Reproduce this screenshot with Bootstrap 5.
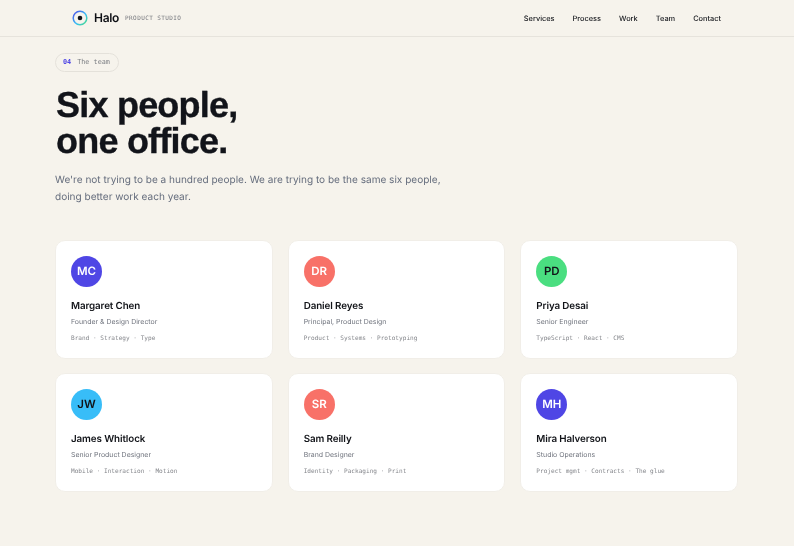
<!doctype html>
<html lang="en"><head><meta charset="utf-8"><title>Halo</title>
<link href="https://cdn.jsdelivr.net/npm/bootstrap@5.3.0/dist/css/bootstrap.min.css" rel="stylesheet">
<style>
body{background:#f6f3ec;font-family:Inter,"Liberation Sans",sans-serif;color:#111318;height:546px;overflow:hidden;text-rendering:geometricPrecision}
.topbar,.page{will-change:opacity}
.topbar{height:37px;padding:0 73px 0 72px;border-bottom:1px solid #e6e3dc}
.brandname{font-size:12px;font-weight:600;letter-spacing:-.3px;color:#0d0f14;margin-left:6px}
.brandtag{font-family:"DejaVu Sans Mono",monospace;font-size:6px;letter-spacing:.4px;color:#75777d;margin-left:6px}
.toplink{font-size:7.4px;font-weight:500;color:#16181d;text-decoration:none;padding-top:1px}
.navlinks{gap:18px}
.page{padding:16px 56px 0 55px}
.chip{width:64px;height:19px;padding:0 0 0 7px;border:1px solid #e4e1da;border-radius:10px;font-family:"DejaVu Sans Mono",monospace;font-size:6.8px;color:#7f8186;gap:6px}
.chip b{color:#4f46e5}
.headline{font-family:"Liberation Sans",sans-serif;font-size:36px;line-height:36px;font-weight:700;letter-spacing:-.78px;margin:15px 0 0 1px;color:#12141a;-webkit-text-stroke:.35px #12141a}
.intro{font-size:10.05px;line-height:17px;color:#646c7c;margin:13px 0 0}
.people{display:grid;grid-template-columns:repeat(3,1fr);grid-auto-rows:119.4px;gap:13.6px 15px;margin-top:34px}
.person{background:#fff;border:1px solid #f1eee8;border-radius:10px;padding:15px}
.avatar{width:31px;height:31px;font-size:11.5px;font-weight:600}
.pname{font-size:9.8px;font-weight:600;letter-spacing:-.1px;color:#111318;margin-top:13px;line-height:14px}
.prole{font-size:6.95px;color:#70747e;margin-top:2px;line-height:11px}
.ptags{font-family:"DejaVu Sans Mono",monospace;font-size:6.1px;color:#84868b;margin-top:6px;line-height:11px;white-space:nowrap}
.a1{background:#4f46e5;color:#fff}.a2{background:#f87168;color:#fff}.a3{background:#4ade80;color:#111318}.a4{background:#38bdf8;color:#111318}
</style></head><body>
<nav class="topbar d-flex align-items-center justify-content-between">
<div class="d-flex align-items-center">
<svg width="16" height="16" viewBox="0 0 16 16"><defs><linearGradient id="g" x1="0" y1="0" x2="1" y2="1"><stop offset="0" stop-color="#4f46e5"/><stop offset=".55" stop-color="#38bdf8"/><stop offset="1" stop-color="#4ade80"/></linearGradient></defs><circle cx="8" cy="8" r="6.8" fill="none" stroke="url(#g)" stroke-width="1.5"/><circle cx="8" cy="8" r="2.3" fill="#111318"/></svg>
<span class="brandname">Halo</span><span class="brandtag">PRODUCT STUDIO</span></div>
<div class="d-flex navlinks"><a class="toplink" href="#">Services</a><a class="toplink" href="#">Process</a><a class="toplink" href="#">Work</a><a class="toplink" href="#">Team</a><a class="toplink" href="#">Contact</a></div>
</nav>
<main class="page">
<div class="chip d-flex align-items-center"><b>04</b><span>The team</span></div>
<h1 class="headline">Six people,<br>one office.</h1>
<p class="intro">We're not trying to be a hundred people. We are trying to be the same six people,<br>doing better work each year.</p>
<div class="people">
<div class="person"><div class="avatar a1 rounded-circle d-flex align-items-center justify-content-center">MC</div><div class="pname">Margaret Chen</div><div class="prole">Founder &amp; Design Director</div><div class="ptags">Brand · Strategy · Type</div></div>
<div class="person"><div class="avatar a2 rounded-circle d-flex align-items-center justify-content-center">DR</div><div class="pname">Daniel Reyes</div><div class="prole">Principal, Product Design</div><div class="ptags">Product · Systems · Prototyping</div></div>
<div class="person"><div class="avatar a3 rounded-circle d-flex align-items-center justify-content-center">PD</div><div class="pname">Priya Desai</div><div class="prole">Senior Engineer</div><div class="ptags">TypeScript · React · CMS</div></div>
<div class="person"><div class="avatar a4 rounded-circle d-flex align-items-center justify-content-center">JW</div><div class="pname">James Whitlock</div><div class="prole">Senior Product Designer</div><div class="ptags">Mobile · Interaction · Motion</div></div>
<div class="person"><div class="avatar a2 rounded-circle d-flex align-items-center justify-content-center">SR</div><div class="pname">Sam Reilly</div><div class="prole">Brand Designer</div><div class="ptags">Identity · Packaging · Print</div></div>
<div class="person"><div class="avatar a1 rounded-circle d-flex align-items-center justify-content-center">MH</div><div class="pname">Mira Halverson</div><div class="prole">Studio Operations</div><div class="ptags">Project mgmt · Contracts · The glue</div></div>
</div>
</main>
<script src="https://cdn.jsdelivr.net/npm/bootstrap@5.3.0/dist/js/bootstrap.bundle.min.js"></script>
</body></html>
